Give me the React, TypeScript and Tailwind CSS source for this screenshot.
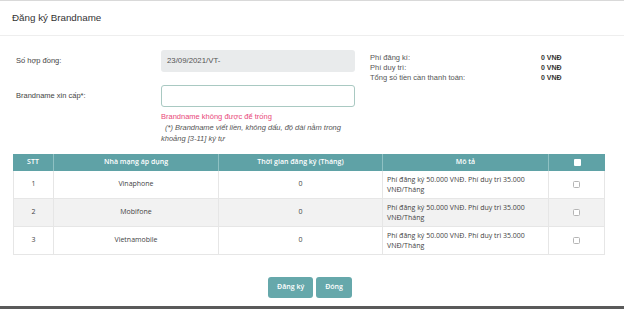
import React from "react";

const rows = [
  { stt: 1, name: "Vinaphone" },
  { stt: 2, name: "Mobifone" },
  { stt: 3, name: "Vietnamobile" },
];

const fees = [
  { label: "Phí đăng kí:", value: "0 VNĐ" },
  { label: "Phí duy trì:", value: "0 VNĐ" },
  { label: "Tổng số tiền cần thanh toán:", value: "0 VNĐ" },
];

export default function App() {
  return (
    <div className="w-[624px] h-[309px] bg-white flex flex-col border-t border-[#d9d9d9] overflow-hidden font-['Liberation_Sans',Arial,sans-serif] text-[#333]">
      {/* Header */}
      <div className="h-[35px] shrink-0 flex items-center pl-[12px] border-b border-[#eeeeee]">
        <span className="text-[9.8px] text-[#333]">Đăng ký Brandname</span>
      </div>

      {/* Form */}
      <div className="flex pt-[14px]">
        <div className="w-[161px] pl-[16px] shrink-0 flex flex-col">
          <div className="h-[22px] flex items-center text-[7.5px] text-[#444]">Số hợp đồng:</div>
          <div className="h-[22px] mt-[13px] flex items-center text-[7.5px] text-[#444]">Brandname xin cấp*:</div>
        </div>
        <div className="w-[194px] shrink-0 flex flex-col">
          <div className="h-[22px] rounded-[3px] bg-[#e9ebec] flex items-center pl-[6px] text-[7.8px] text-[#555]">
            23/09/2021/VT-
          </div>
          <div className="h-[22px] mt-[13px] rounded-[3px] border border-[#a9c9c2] bg-white" />
          <div className="mt-[4px] text-[7.5px] text-[#e8477a] leading-[11px]">Brandname không được để trống</div>
          <div className="text-[7.5px] italic text-[#555] leading-[11px] pl-[4px] whitespace-nowrap">
            (*) Brandname viết liền, không dấu, độ dài nằm trong
          </div>
          <div className="text-[7.5px] italic text-[#555] leading-[11px]">khoảng [3-11] ký tự</div>
        </div>
        <div className="ml-[15px] w-[210px] flex flex-col pt-[3px]">
          {fees.map((f) => (
            <div key={f.label} className="flex h-[10px] items-center text-[7.5px]">
              <span className="w-[171px] text-[#555]">{f.label}</span>
              <span className="font-bold text-[#333] text-[7px]">{f.value}</span>
            </div>
          ))}
        </div>
      </div>

      {/* Table */}
      <div className="mt-[10px] ml-[13px] w-[592px] font-['Open_Sans',sans-serif] text-[7px] text-[#444]">
        <div className="flex h-[17px] bg-[#5fa2a6] text-white text-[7px] font-semibold">
          <div className="w-[41px] flex items-center justify-center border-r border-[#8fc1c3]">STT</div>
          <div className="w-[165px] flex items-center justify-center border-r border-[#8fc1c3]">Nhà mạng áp dụng</div>
          <div className="w-[164px] flex items-center justify-center border-r border-[#8fc1c3]">Thời gian đăng ký (Tháng)</div>
          <div className="w-[166px] flex items-center justify-center border-r border-[#8fc1c3]">Mô tả</div>
          <div className="flex-1 flex items-center justify-center">
            <span className="w-[7px] h-[7px] bg-white rounded-[1px]" />
          </div>
        </div>
        {rows.map((r, i) => (
          <div
            key={r.stt}
            className={`flex h-[28px] border-b border-l border-r border-[#e6e6e6] ${i === 1 ? "bg-[#f2f2f2]" : "bg-white"}`}
          >
            <div className="w-[40px] flex items-center justify-center border-r border-[#e6e6e6]">{r.stt}</div>
            <div className="w-[165px] flex items-center justify-center border-r border-[#e6e6e6]">{r.name}</div>
            <div className="w-[164px] flex items-center justify-center border-r border-[#e6e6e6]">0</div>
            <div className="w-[166px] flex items-center pl-[4px] pr-[6px] leading-[10px] border-r border-[#e6e6e6]">
              Phí đăng ký 50.000 VNĐ. Phí duy trì 35.000 VNĐ/Tháng
            </div>
            <div className="flex-1 flex items-center justify-center">
              <span className="w-[7px] h-[7px] border border-[#b5b5b5] rounded-[1.5px] bg-white" />
            </div>
          </div>
        ))}
      </div>

      {/* Footer buttons */}
      <div className="flex-1 flex items-start justify-center pt-[22px] gap-[3px] pr-[4px] font-['Open_Sans',sans-serif]">
        <button className="h-[21px] px-[9px] rounded-[3px] bg-[#66a8ab] text-white text-[7px] font-semibold">Đăng ký</button>
        <button className="h-[21px] px-[9px] rounded-[3px] bg-[#66a8ab] text-white text-[7px] font-semibold">Đóng</button>
      </div>
      <div className="h-[3px] shrink-0 bg-[#5a5a5a]" />
    </div>
  );
}
